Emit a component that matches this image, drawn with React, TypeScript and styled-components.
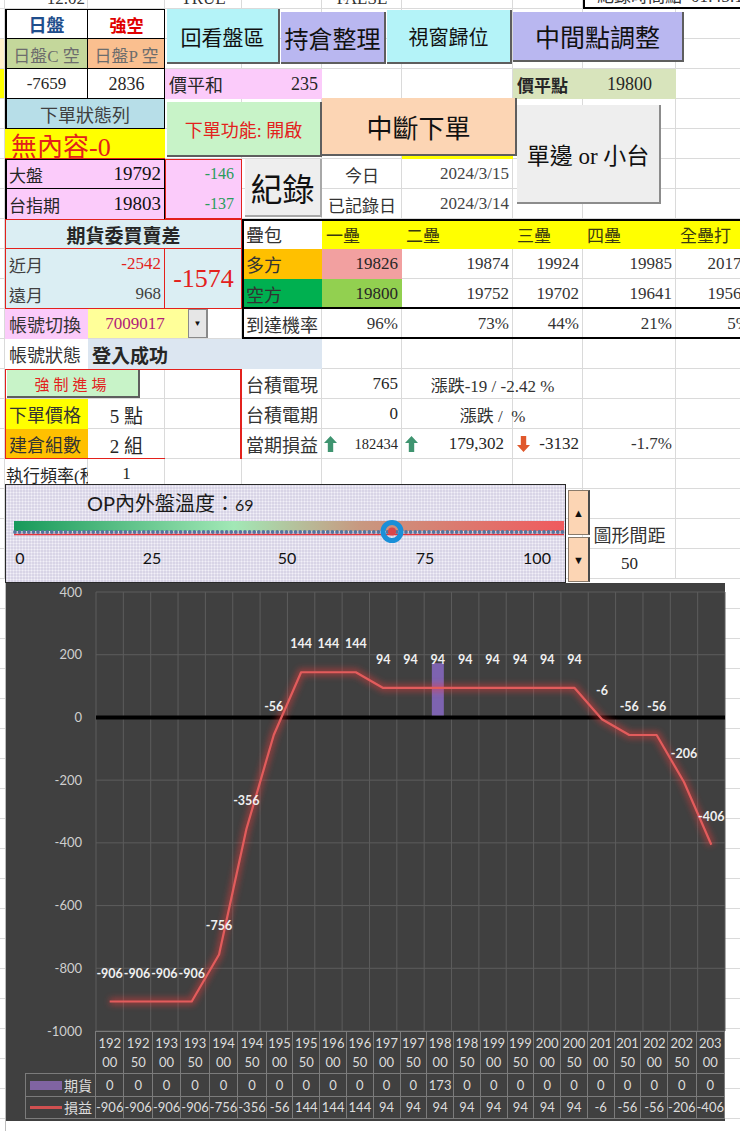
import React from "react";
import styled, { createGlobalStyle } from "styled-components";

const SERIF = `"Liberation Serif", "Noto Sans CJK TC", serif`;
const SANS = `Lato, "Noto Sans CJK TC", sans-serif`;

const PINK = "#fbcbfa";
const CYAN = "#b4f3f8";
const LAV = "#b9b7f0";
const PEACH = "#fcd5b4";
const LBLUE = "#dbeef3";
const RED = "#e3211c";

const GlobalStyle = createGlobalStyle`
  *, *::before, *::after { box-sizing: border-box; }
  html, body { margin: 0; padding: 0; background: #fff; overflow: hidden; }
`;

const COLS = "ABCDEFGHIJ";
// sheet row / column letters -> grid-area
const at = (r1: number, c1: string, r2 = r1, c2 = c1) =>
  `${r1 + 1} / ${COLS.indexOf(c1) + 1} / ${r2 + 2} / ${COLS.indexOf(c2) + 2}`;

const Page = styled.div`
  width: 740px;
  height: 1131px;
  overflow: hidden;
  font-family: ${SERIF};
  color: #222;
`;

const Sheet = styled.div`
  display: grid;
  width: 754px;
  grid-template-columns: 5px 83px 77px 77px 80px 80px 111px 70px 93px 78px;
  grid-template-rows: 9px repeat(19, 30px) 4px;
`;

const GridCell = styled.div<{ $at: string; $bg?: string }>`
  grid-area: ${(p) => p.$at};
  border-right: 1px solid #dadada;
  border-bottom: 1px solid #dadada;
  background: ${(p) => p.$bg ?? "#fff"};
`;

const Cell = styled.div<{
  $at: string;
  $bg?: string;
  $color?: string;
  $align?: string;
  $size?: number;
  $bold?: boolean;
  $pad?: string;
}>`
  grid-area: ${(p) => p.$at};
  display: flex;
  align-items: center;
  justify-content: ${(p) => p.$align ?? "flex-start"};
  gap: 4px;
  padding: ${(p) => p.$pad ?? "0 4px"};
  min-width: 0;
  background: ${(p) => p.$bg ?? "transparent"};
  color: ${(p) => p.$color ?? "#262626"};
  font-size: ${(p) => p.$size ?? 17}px;
  font-weight: ${(p) => (p.$bold ? 700 : 400)};
  white-space: nowrap;
  overflow: hidden;
`;

const TopCell = styled.div<{ $at: string; $align?: string }>`
  grid-area: ${(p) => p.$at};
  display: flex;
  align-items: flex-end;
  justify-content: ${(p) => p.$align ?? "flex-start"};
  padding: 0 3px 1px;
  font-size: 17px;
  line-height: 18px;
  color: #333;
  white-space: nowrap;
  overflow: hidden;
`;

const StampBox = styled(TopCell)`
  gap: 9px;
  padding-left: 12px;
  background: #fff;
  border-left: 2px solid #000;
  border-bottom: 2px solid #000;
`;

const Big = styled.span`
  font-size: 19px;
  color: #111;
`;

const Red = styled.span`
  color: ${RED};
`;

const Small = styled.span`
  font-size: 14.5px;
`;

const DiffStack = styled.div<{ $at: string }>`
  grid-area: ${(p) => p.$at};
  display: grid;
  grid-template-rows: 1fr 1fr;
  align-items: center;
  justify-items: end;
  padding-right: 8px;
  background: ${PINK};
  color: #2a9d5c;
  font-size: 16px;
`;

const AccountPick = styled.div<{ $at: string }>`
  grid-area: ${(p) => p.$at};
  display: flex;
  align-items: stretch;
  padding-bottom: 1px;
`;

const AccountValue = styled.div`
  width: 100px;
  display: flex;
  align-items: center;
  justify-content: center;
  background: #ffff99;
  color: #b0207a;
  font-size: 17px;
  padding-right: 6px;
`;

const DropButton = styled.div`
  width: 20px;
  display: flex;
  align-items: center;
  justify-content: center;
  background: #e6e6e6;
  border: 1px solid #8a8a8a;
  border-right-width: 2px;
  font-size: 8px;
  color: #111;
`;

const Frame = styled.div<{ $at: string; $c?: string; $w: string }>`
  grid-area: ${(p) => p.$at};
  border-style: solid;
  border-color: ${(p) => p.$c ?? "#000"};
  border-width: ${(p) => p.$w};
  pointer-events: none;
`;

const Toolbar = styled.div<{ $at: string }>`
  grid-area: ${(p) => p.$at};
  display: flex;
  align-items: flex-start;
  gap: 1px;
  padding-left: 2px;
`;

const SheetButton = styled.div<{
  $at?: string;
  $bg: string;
  $size: number;
  $color?: string;
  $m?: string;
  $w?: number;
  $h?: number;
  $shade?: string;
  $ls?: number;
}>`
  ${(p) => (p.$at ? `grid-area: ${p.$at};` : "")}
  ${(p) => (p.$w ? `width: ${p.$w}px; flex: none;` : "")}
  ${(p) => (p.$h ? `height: ${p.$h}px;` : "")}
  margin: ${(p) => p.$m ?? "0"};
  display: flex;
  align-items: center;
  justify-content: center;
  background: ${(p) => p.$bg};
  color: ${(p) => p.$color ?? "#111"};
  font-size: ${(p) => p.$size}px;
  letter-spacing: ${(p) => p.$ls ?? 0}px;
  border-right: 2px solid ${(p) => p.$shade ?? "#5e5e5e"};
  border-bottom: 2px solid ${(p) => p.$shade ?? "#5e5e5e"};
  white-space: nowrap;
  overflow: hidden;
  cursor: default;
`;

const SliderRow = styled.div<{ $at: string }>`
  grid-area: ${(p) => p.$at};
  display: flex;
  align-items: flex-start;
  padding-top: 25px;
`;

const SliderBox = styled.div`
  width: 561px;
  height: 99px;
  border: 1px solid #2a2a2a;
  background-color: #d8d4e6;
  background-image: radial-gradient(#f2f0f8 0.9px, transparent 1.1px);
  background-size: 3px 3px;
  font-family: ${SANS};
`;

const SliderTitle = styled.div`
  padding: 6px 0 0 81px;
  height: 30px;
  font-size: 20px;
  line-height: 24px;
  color: #1a1a1a;

  small {
    font-size: 16px;
  }
`;

const TrackSvg = styled.svg`
  display: block;
  font-family: ${SANS};
`;

const SpinColumn = styled.div`
  width: 22px;
  height: 92px;
  margin: 6px 0 0 2px;
  display: flex;
  flex-direction: column;
  gap: 2px;
`;

const SpinButton = styled.div`
  flex: 1;
  display: flex;
  align-items: center;
  justify-content: center;
  background: ${PEACH};
  border: 1px solid #8a7a6a;
  border-right: 2px solid #4a4a4a;
  font-size: 11px;
  color: #111;
`;

const ChartRow = styled.div`
  display: flex;
  height: 548px;
  background-color: #fff;
  background-image: repeating-linear-gradient(
    to bottom,
    transparent 0 25px,
    #dadada 25px 26px,
    transparent 26px 30px
  );
`;

const LeftStub = styled.div`
  width: 6px;
  flex: none;
  border-right: 1px solid #bdbdbd;
`;

const RightStub = styled.div`
  flex: 1;
`;

const ChartPanel = styled.div`
  width: 719px;
  height: 538px;
  flex: none;
  background: #404040;
  display: flex;
  flex-direction: column;
  font-family: ${SANS};
`;

const PlotSvg = styled.svg`
  display: block;
  overflow: visible;
  font-family: ${SANS};
`;

const DataTable = styled.div`
  margin-left: 19px;
  width: 700px;
  display: grid;
  grid-template-columns: 70px repeat(23, 1fr);
  grid-template-rows: 42px 23px 22px;
  border-right: 1px solid #7b7b7b;
  border-bottom: 1px solid #7b7b7b;
  color: #dcdcdc;
  font-size: 13px;
`;

const TCell = styled.div<{ $blank?: boolean }>`
  display: flex;
  align-items: center;
  justify-content: center;
  text-align: center;
  line-height: 19px;
  white-space: nowrap;
  border-left: ${(p) => (p.$blank ? "none" : "1px solid #7b7b7b")};
  border-top: ${(p) => (p.$blank ? "none" : "1px solid #7b7b7b")};
`;

const LegendCell = styled(TCell)`
  justify-content: flex-end;
  gap: 2px;
  padding-right: 3px;
  font-size: 14px;
`;

const Swatch = styled.span<{ $h: number; $c: string }>`
  display: inline-block;
  width: 32px;
  height: ${(p) => p.$h}px;
  background: ${(p) => p.$c};
`;

const CATS = Array.from({ length: 23 }, (_, i) => String(19200 + i * 50));
const PNL = [
  -906, -906, -906, -906, -756, -356, -56, 144, 144, 144, 94, 94, 94, 94, 94, 94, 94, 94, -6, -56,
  -56, -206, -406,
];
const FUT = CATS.map((_, i) => (i === 12 ? 173 : 0));

const PX0 = 90;
const PW = 629;
const CW = PW / 23;
const yOf = (v: number) => 9 + ((400 - v) * 439) / 1400;
const cx = (i: number) => PX0 + CW * (i + 0.5);

// Excel icon-set arrows
const Arrow = ({ up }: { up?: boolean }) => (
  <svg width="13" height="16" viewBox="0 0 13 16">
    {up ? (
      <path d="M6.5 0 L13 7 L9.2 7 L9.2 16 L3.8 16 L3.8 7 L0 7 Z" fill="#3f9470" />
    ) : (
      <path d="M3.8 0 L9.2 0 L9.2 9 L13 9 L6.5 16 L0 9 L3.8 9 Z" fill="#e0582c" />
    )}
  </svg>
);

function TempTrack() {
  const dots = [];
  for (let x = 9; x < 558; x += 4.6) {
    dots.push(<circle key={x} cx={x} cy={17} r={1.9} fill="#56749c" />);
  }
  const labels: [string, number][] = [
    ["0", 14],
    ["25", 146],
    ["50", 281],
    ["75", 419],
    ["100", 531],
  ];
  return (
    <TrackSvg width={559} height={67} viewBox="0 0 559 67">
      <defs>
        <linearGradient id="tempGrad" x1="0" x2="1" y1="0" y2="0">
          <stop offset="0" stopColor="#17995a" />
          <stop offset="0.4" stopColor="#a2e8b6" />
          <stop offset="0.63" stopColor="#c89880" />
          <stop offset="1" stopColor="#f05a5e" />
        </linearGradient>
      </defs>
      <rect x={8} y={6} width={550} height={10} fill="url(#tempGrad)" />
      <line x1={8} x2={558} y1={19.5} y2={19.5} stroke="#e4343c" strokeWidth={1.6} />
      {dots}
      <circle cx={386} cy={16.5} r={9} fill="none" stroke="#1a8fd8" strokeWidth={5} />
      <circle cx={386} cy={16.5} r={4} fill="#d9474a" />
      {labels.map(([t, x]) => (
        <text key={t} x={x} y={49} textAnchor="middle" fontSize={16} fill="#111">
          {t}
        </text>
      ))}
    </TrackSvg>
  );
}

function PnlPlot() {
  const ticks = [400, 200, 0, -200, -400, -600, -800, -1000];
  const pts = PNL.map((v, i) => `${cx(i)},${yOf(v)}`).join(" ");
  return (
    <PlotSvg width={719} height={448} viewBox="0 0 719 448">
      <defs>
        <filter id="pnlGlow" x="-10%" y="-20%" width="120%" height="140%">
          <feGaussianBlur stdDeviation="3.2" />
        </filter>
      </defs>
      {ticks.map((v) => (
        <line key={`h${v}`} x1={PX0} x2={PX0 + PW} y1={yOf(v)} y2={yOf(v)} stroke="#5c5c5c" />
      ))}
      {Array.from({ length: 24 }, (_, k) => (
        <line
          key={`v${k}`}
          x1={PX0 + CW * k}
          x2={PX0 + CW * k}
          y1={yOf(400)}
          y2={yOf(-1000)}
          stroke="#5c5c5c"
        />
      ))}
      {ticks.map((v) => (
        <text key={`t${v}`} x={76} y={yOf(v) + 4.5} textAnchor="end" fontSize={13} fill="#cfcfcf">
          {v}
        </text>
      ))}
      <line x1={PX0} x2={PX0 + PW} y1={yOf(0)} y2={yOf(0)} stroke="#000" strokeWidth={4} />
      {FUT.map((v, i) =>
        v ? (
          <rect
            key={`f${i}`}
            x={cx(i) - 6}
            y={yOf(v)}
            width={12}
            height={yOf(0) - yOf(v) - 2}
            fill="#7d63b0"
          />
        ) : null
      )}
      <polyline
        points={pts}
        fill="none"
        stroke="#ff3b3b"
        strokeWidth={7}
        opacity={0.45}
        filter="url(#pnlGlow)"
      />
      <polyline points={pts} fill="none" stroke="#e25c5c" strokeWidth={2.2} strokeLinejoin="round" />
      {PNL.map((v, i) => (
        <text
          key={`l${i}`}
          x={cx(i)}
          y={yOf(v) - 24}
          textAnchor="middle"
          fontSize={12.5}
          fontWeight={700}
          fill="#f0f0f0"
        >
          {v}
        </text>
      ))}
    </PlotSvg>
  );
}

const LONG = ["19874", "19924", "19985", "20177"];
const SHORT = ["19752", "19702", "19641", "19568"];
const PROB = ["73%", "44%", "21%", "5%"];
const BASES = ["一壘", "二壘", "三壘", "四壘", "全壘打"];

export default function App() {
  const grid = [];
  for (let r = 0; r < 20; r++) {
    for (const c of COLS) {
      const bg = c === "A" && r === 2 ? "#fff2cc" : c === "A" && r === 3 ? "#ffff00" : "#fff";
      grid.push(<GridCell key={`${r}${c}`} $at={at(r, c)} $bg={bg} />);
    }
  }

  return (
    <Page>
      <GlobalStyle />
      <Sheet>
        {grid}

        <TopCell $at={at(0, "B")} $align="flex-end">12.02</TopCell>
        <TopCell $at={at(0, "D")} $align="center">TRUE</TopCell>
        <TopCell $at={at(0, "F")} $align="center">FALSE</TopCell>
        <StampBox $at={at(0, "I", 0, "J")}>
          <span>紀錄時間點</span>
          <span>01:45:1</span>
        </StampBox>

        <Cell $at={at(1, "B")} $bg="#fff" $align="center" $color="#1f4e8c" $size={18} $bold>
          日盤
        </Cell>
        <Cell $at={at(1, "C")} $bg="#fff" $align="center" $color="#e00000" $bold>
          強空
        </Cell>
        <Cell $at={at(2, "B")} $bg="#c4d79b" $align="center" $color="#6d6d6d">
          日盤C 空
        </Cell>
        <Cell $at={at(2, "C")} $bg="#fabf8f" $align="center" $color="#6d6d6d">
          日盤P 空
        </Cell>
        <Cell $at={at(3, "B")} $bg="#fff" $align="center">-7659</Cell>
        <Cell $at={at(3, "C")} $bg="#fff" $align="center" $size={18}>2836</Cell>
        <Cell $at={at(3, "D", 3, "E")} $bg={PINK} $align="space-between" $size={18}>
          <span>價平和</span>
          <span>235</span>
        </Cell>
        <Cell $at={at(3, "H")} $bg="#d8e4bc" $bold>價平點</Cell>
        <Cell $at={at(3, "I")} $bg="#d8e4bc" $align="center" $size={18}>19800</Cell>

        <Cell $at={at(4, "B", 4, "C")} $bg="#b7dee8" $align="center" $color="#404040" $size={18}>
          下單狀態列
        </Cell>
        <Cell $at={at(5, "B", 5, "C")} $bg="#ffff00" $color={RED} $size={26} $pad="0 6px">
          無內容-0
        </Cell>
        <Cell $at={at(5, "G")} $bg="#ffff00" />

        <Cell $at={at(6, "B", 6, "C")} $bg={PINK} $align="space-between">
          <span>大盤</span>
          <Big>19792</Big>
        </Cell>
        <Cell $at={at(7, "B", 7, "C")} $bg={PINK} $align="space-between">
          <span>台指期</span>
          <Big>19803</Big>
        </Cell>
        <DiffStack $at={at(6, "D", 7, "D")}>
          <span>-146</span>
          <span>-137</span>
        </DiffStack>
        <Cell $at={at(6, "F")} $align="center" $color="#333">今日</Cell>
        <Cell $at={at(7, "F")} $align="center" $color="#333" $pad="0 2px">已記錄日</Cell>
        <Cell $at={at(6, "G")} $align="flex-end" $color="#444">2024/3/15</Cell>
        <Cell $at={at(7, "G")} $align="flex-end" $color="#444">2024/3/14</Cell>

        <Cell $at={at(8, "B", 8, "D")} $bg={LBLUE} $align="center" $size={19} $bold>
          期貨委買賣差
        </Cell>
        <Cell $at={at(9, "B", 9, "C")} $bg={LBLUE} $align="space-between" $color="#404040">
          <span>近月</span>
          <Red>-2542</Red>
        </Cell>
        <Cell $at={at(10, "B", 10, "C")} $bg={LBLUE} $align="space-between" $color="#404040">
          <span>遠月</span>
          <span>968</span>
        </Cell>
        <Cell $at={at(9, "D", 10, "D")} $bg={LBLUE} $align="center" $color={RED} $size={26}>
          -1574
        </Cell>

        <Cell $at={at(8, "E")} $bg="#fff" $color="#333" $size={18}>疊包</Cell>
        {BASES.map((t, i) => (
          <Cell key={t} $at={at(8, "FGHIJ"[i])} $bg="#ffff00" $color="#3a3a10">
            {t}
          </Cell>
        ))}
        <Cell $at={at(9, "E")} $bg="#ffc000" $color="#333" $size={18}>多方</Cell>
        <Cell $at={at(9, "F")} $bg="#f2a0a0" $align="flex-end">19826</Cell>
        {LONG.map((v, i) => (
          <Cell key={v} $at={at(9, "GHIJ"[i])} $align="flex-end" $color="#333">
            {v}
          </Cell>
        ))}
        <Cell $at={at(10, "E")} $bg="#00b050" $color="#333" $size={18}>空方</Cell>
        <Cell $at={at(10, "F")} $bg="#92d050" $align="flex-end">19800</Cell>
        {SHORT.map((v, i) => (
          <Cell key={v} $at={at(10, "GHIJ"[i])} $align="flex-end" $color="#333">
            {v}
          </Cell>
        ))}
        <Cell $at={at(11, "E")} $color="#333" $size={18}>到達機率</Cell>
        <Cell $at={at(11, "F")} $align="flex-end" $color="#333">96%</Cell>
        {PROB.map((v, i) => (
          <Cell key={v} $at={at(11, "GHIJ"[i])} $align="flex-end" $color="#333">
            {v}
          </Cell>
        ))}

        <Cell $at={at(11, "B")} $bg={PINK} $color="#333" $size={18}>帳號切換</Cell>
        <AccountPick $at={at(11, "C", 11, "D")}>
          <AccountValue>7009017</AccountValue>
          <DropButton>▼</DropButton>
        </AccountPick>
        <Cell $at={at(12, "B")} $bg="#fff" $color="#333" $size={18}>帳號狀態</Cell>
        <Cell $at={at(12, "C", 12, "E")} $bg="#dce6f1" $size={19} $bold>登入成功</Cell>

        <Cell $at={at(13, "E")} $color="#333" $size={18}>台積電現</Cell>
        <Cell $at={at(13, "F")} $align="flex-end">765</Cell>
        <Cell $at={at(13, "G", 13, "H")} $align="center" $color="#333">
          漲跌-19 / -2.42 %
        </Cell>
        <Cell $at={at(14, "B")} $bg="#ffff00" $color="#333" $size={18}>下單價格</Cell>
        <Cell $at={at(14, "C")} $align="center" $size={19}>5 點</Cell>
        <Cell $at={at(14, "E")} $color="#333" $size={18}>台積電期</Cell>
        <Cell $at={at(14, "F")} $align="flex-end">0</Cell>
        <Cell $at={at(14, "G", 14, "H")} $align="center" $color="#333">
          漲跌 /&nbsp; %
        </Cell>
        <Cell $at={at(15, "B")} $bg="#ffc000" $color="#333" $size={18}>建倉組數</Cell>
        <Cell $at={at(15, "C")} $align="center" $size={19}>2 組</Cell>
        <Cell $at={at(15, "E")} $color="#333" $size={18}>當期損益</Cell>
        <Cell $at={at(15, "F")} $align="space-between" $pad="0 4px 0 2px">
          <Arrow up />
          <Small>182434</Small>
        </Cell>
        <Cell $at={at(15, "G")} $align="space-between" $pad="0 9px 0 3px">
          <Arrow up />
          <span>179,302</span>
        </Cell>
        <Cell $at={at(15, "H")} $align="space-between" $pad="0 4px 0 4px">
          <Arrow />
          <span>-3132</span>
        </Cell>
        <Cell $at={at(15, "I")} $align="flex-end" $color="#333">-1.7%</Cell>
        <Cell $at={at(16, "B")} $pad="0 1px" $size={17}>執行頻率(秒)</Cell>
        <Cell $at={at(16, "C")} $align="center">1</Cell>
        <Cell $at={at(18, "I")} $align="center" $color="#333" $size={18}>圖形間距</Cell>
        <Cell $at={at(19, "I")} $align="center">50</Cell>

        <Toolbar $at={at(1, "D", 2, "J")}>
          <SheetButton $bg={CYAN} $size={21} $w={113} $h={55}>回看盤區</SheetButton>
          <SheetButton $bg={LAV} $size={24} $w={105} $h={52} $m="3px 0 0">持倉整理</SheetButton>
          <SheetButton $bg={CYAN} $size={20} $w={125} $h={54} $m="1px 0 0">視窗歸位</SheetButton>
          <SheetButton $bg={LAV} $size={25} $w={171} $h={50} $m="3px 0 0">中間點調整</SheetButton>
        </Toolbar>
        <SheetButton $at={at(4, "D", 5, "E")} $bg="#c8f3c8" $color={RED} $size={18} $m="3px 0 2px 2px">
          下單功能: 開啟
        </SheetButton>
        <SheetButton $at={at(4, "F", 5, "G")} $bg={PEACH} $size={26} $m="-1px -4px 3px 0">
          中斷下單
        </SheetButton>
        <SheetButton
          $at={at(4, "H", 7, "I")}
          $bg="#eeeeee"
          $shade="#8c8c8c"
          $size={23}
          $m="6px 15px 15px 4px"
        >
          單邊 or 小台
        </SheetButton>
        <SheetButton $at={at(6, "E", 7, "E")} $bg="#eeeeee" $shade="#a8a8a8" $size={32} $m="0 0 2px 3px">
          紀錄
        </SheetButton>
        <SheetButton
          $at={at(13, "B", 13, "C")}
          $bg="#c8f3c8"
          $color={RED}
          $size={15}
          $ls={4}
          $m="1px 25px 1px 2px"
        >
          強制進場
        </SheetButton>

        <Frame $at={at(1, "B", 4, "C")} $w="1px 1px 1px 2px" />
        <Frame $at={at(1, "B", 3, "B")} $w="0 1px 0 0" />
        <Frame $at={at(1, "B", 1, "C")} $w="0 0 1px 0" />
        <Frame $at={at(2, "B", 2, "C")} $w="0 0 1px 0" />
        <Frame $at={at(3, "B", 3, "C")} $w="0 0 1px 0" />
        <Frame $at={at(5, "B", 5, "C")} $w="0 0 1px 0" $c={RED} />
        <Frame $at={at(6, "B", 7, "C")} $w="1px 1px 0 2px" />
        <Frame $at={at(6, "B", 6, "C")} $w="0 0 1px 0" />
        <Frame $at={at(6, "D", 7, "D")} $w="1px" $c={RED} />
        <Frame $at={at(8, "B", 10, "D")} $w="1px" $c={RED} />
        <Frame $at={at(8, "B", 8, "D")} $w="0 0 1px 0" $c={RED} />
        <Frame $at={at(9, "B", 10, "C")} $w="0 1px 0 0" $c={RED} />
        <Frame $at={at(8, "E", 10, "J")} $w="2px 0 2px 2px" />
        <Frame $at={at(11, "E", 11, "J")} $w="0 0 2px 2px" />
        <Frame $at={at(13, "B", 15, "D")} $w="1px 2px 0 1px" $c={RED} />
        <Frame $at={at(15, "B", 15, "C")} $w="0 0 1px 0" $c={RED} />

        <SliderRow $at={at(16, "B", 20, "I")}>
          <SliderBox>
            <SliderTitle>
              OP內外盤溫度：<small>69</small>
            </SliderTitle>
            <TempTrack />
          </SliderBox>
          <SpinColumn>
            <SpinButton>▲</SpinButton>
            <SpinButton>▼</SpinButton>
          </SpinColumn>
        </SliderRow>
      </Sheet>

      <ChartRow>
        <LeftStub />
        <ChartPanel>
          <PnlPlot />
          <DataTable>
            <TCell $blank />
            {CATS.map((c) => (
              <TCell key={c}>
                <span>
                  {c.slice(0, 3)}
                  <br />
                  {c.slice(3)}
                </span>
              </TCell>
            ))}
            <LegendCell>
              <Swatch $h={9} $c="#8064a2" />
              期貨
            </LegendCell>
            {FUT.map((v, i) => (
              <TCell key={`fut${i}`}>{v}</TCell>
            ))}
            <LegendCell>
              <Swatch $h={3} $c="#d05050" />
              損益
            </LegendCell>
            {PNL.map((v, i) => (
              <TCell key={`pnl${i}`}>{v}</TCell>
            ))}
          </DataTable>
        </ChartPanel>
        <RightStub />
      </ChartRow>
    </Page>
  );
}
